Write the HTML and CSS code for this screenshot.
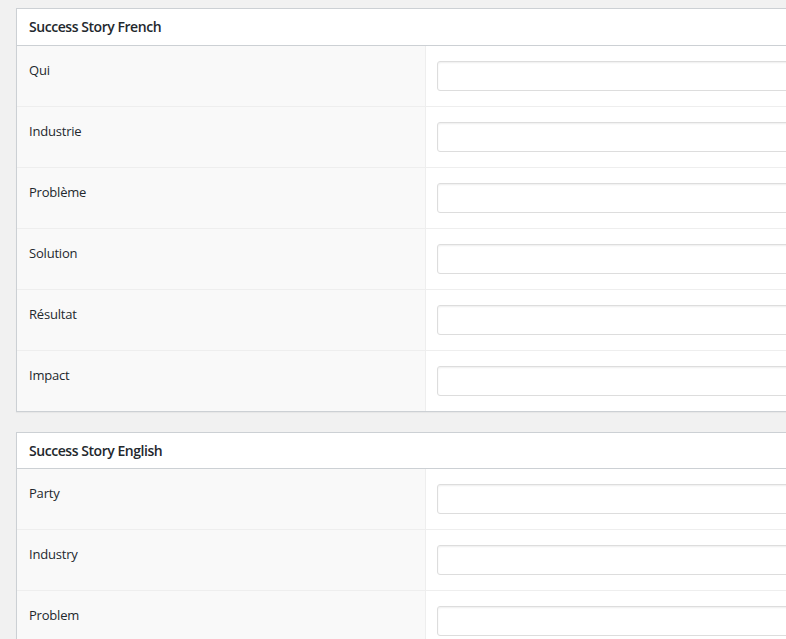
FILE: index.html
```html
<!DOCTYPE html>
<html lang="fr">
<head>
<meta charset="utf-8">
<title>Success Story</title>
<link rel="stylesheet" href="styles.css">
</head>
<body>
<div class="page">
  <section class="postbox">
    <h2 class="postbox-title">Success Story French</h2>
    <div class="fields">
      <div class="field"><div class="label">Qui</div><div class="input-wrap"><input class="text" type="text"></div></div>
      <div class="field"><div class="label">Industrie</div><div class="input-wrap"><input class="text" type="text"></div></div>
      <div class="field"><div class="label">Problème</div><div class="input-wrap"><input class="text" type="text"></div></div>
      <div class="field"><div class="label">Solution</div><div class="input-wrap"><input class="text" type="text"></div></div>
      <div class="field"><div class="label">Résultat</div><div class="input-wrap"><input class="text" type="text"></div></div>
      <div class="field"><div class="label">Impact</div><div class="input-wrap"><input class="text" type="text"></div></div>
    </div>
  </section>
  <section class="postbox">
    <h2 class="postbox-title">Success Story English</h2>
    <div class="fields">
      <div class="field"><div class="label">Party</div><div class="input-wrap"><input class="text" type="text"></div></div>
      <div class="field"><div class="label">Industry</div><div class="input-wrap"><input class="text" type="text"></div></div>
      <div class="field"><div class="label">Problem</div><div class="input-wrap"><input class="text" type="text"></div></div>
      <div class="field"><div class="label">Solution</div><div class="input-wrap"><input class="text" type="text"></div></div>
    </div>
  </section>
</div>
</body>
</html>
```
FILE: styles.css
```css
html, body {
  margin: 0;
  padding: 0;
  overflow: hidden;
  background: #f1f1f1;
}
body {
  font-family: "Open Sans", "Noto Sans", sans-serif;
  font-size: 13px;
  color: #23282d;
}
.page {
  display: flex;
  flex-direction: column;
  gap: 20px;
  padding: 8px 0 0 16px;
  width: 1100px;
}
.postbox {
  background: #fff;
  border: 1px solid #ccd0d4;
  box-shadow: 0 1px 1px rgba(0,0,0,.04);
}
.postbox-title {
  margin: 0;
  height: 36px;
  line-height: 36px;
  padding: 0 12px;
  font-size: 14px;
  font-weight: 600;
  letter-spacing: -0.45px;
  border-bottom: 1px solid #ccd0d4;
}
.postbox + .postbox .postbox-title {
  height: 35px;
}
.field {
  display: flex;
  height: 60px;
}
.field + .field {
  border-top: 1px solid #eeeeee;
}
.label {
  width: 409px;
  flex: none;
  background: #f9f9f9;
  border-right: 1px solid #eeeeee;
  padding: 15px 12px;
  box-sizing: border-box;
  line-height: 18px;
  font-weight: 500;
  letter-spacing: -0.2px;
}
.input-wrap {
  flex: 1;
  padding: 15px 11px;
}
.text {
  display: block;
  width: 100%;
  height: 30px;
  box-sizing: border-box;
  margin: 0;
  border: 1px solid #dddddd;
  border-radius: 3px;
  box-shadow: inset 0 1px 2px rgba(0,0,0,.07);
  background: #fff;
}
```
